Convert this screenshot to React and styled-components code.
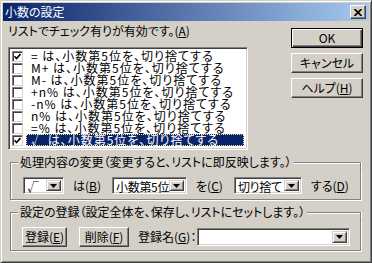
import React from "react";
import styled, { createGlobalStyle } from "styled-components";

const GlobalStyle = createGlobalStyle`
  body {
    margin: 0;
    font-family: "Noto Sans CJK JP", "Noto Sans", sans-serif;
    font-size: 12px;
    font-feature-settings: "palt";
    color: #000;
  }
`;

const items = [
  { op: "=", checked: true },
  { op: "M+" },
  { op: "M-" },
  { op: "+n%" },
  { op: "-n%" },
  { op: "n%" },
  { op: "=%" },
  { op: "√", checked: true, selected: true },
];

const Window = styled.div`
  width: 372px;
  height: 263px;
  box-sizing: border-box;
  background: #d4d0c8;
  border: 1px solid;
  border-color: #d4d0c8 #404040 #404040 #d4d0c8;
  box-shadow: inset 1px 1px #fff, inset -1px -1px #808080;
  padding: 2px;
  display: flex;
  flex-direction: column;
  overflow: hidden;
`;

const TitleBar = styled.div`
  flex: none;
  height: 18px;
  display: flex;
  align-items: center;
  justify-content: space-between;
  padding: 0 3px 0 2px;
  background: linear-gradient(to right, #0a246a, #a6caf0);
`;

const Title = styled.span`
  color: #fff;
  font-size: 12px;
  line-height: 18px;
`;

const CloseButton = styled.div`
  width: 16px;
  height: 14px;
  box-sizing: border-box;
  background: #d4d0c8;
  border: 1px solid;
  border-color: #fff #404040 #404040 #fff;
  box-shadow: inset -1px -1px #808080;
  display: flex;
  align-items: center;
  justify-content: center;
`;

const Body = styled.div`
  display: flex;
  flex-direction: column;
  padding: 0 6px 0 5px;
`;

const TopSection = styled.div`
  display: flex;
  justify-content: space-between;
`;

const LeftCol = styled.div`
  display: flex;
  flex-direction: column;
  padding-top: 3px;
`;

const Caption = styled.div`
  height: 14px;
  line-height: 14px;
  white-space: nowrap;
`;

const ListBox = styled.div`
  margin-top: 9px;
  width: 240px;
  height: 103px;
  box-sizing: border-box;
  background: #fff;
  border: 1px solid;
  border-color: #808080 #fff #fff #808080;
  box-shadow: inset 1px 1px #404040, inset -1px -1px #d4d0c8;
  padding: 2px 3px 0 3px;
  overflow: hidden;
`;

const Row = styled.div`
  display: flex;
  align-items: center;
  height: 12px;
`;

const CheckBox = styled.div`
  flex: none;
  width: 11px;
  height: 11px;
  box-sizing: border-box;
  background: #fff;
  border: 1px solid;
  border-color: #808080 #d4d0c8 #d4d0c8 #808080;
  box-shadow: inset 1px 1px #404040;
  display: flex;
  align-items: center;
  justify-content: center;
`;

const ItemText = styled.div`
  flex: 1;
  margin-left: 3px;
  height: 12px;
  line-height: 12px;
  padding-left: 5px;
  letter-spacing: 1px;
  white-space: nowrap;
  box-sizing: border-box;
  background: ${(p) => (p.$selected ? "#0a246a" : "transparent")};
  color: ${(p) => (p.$selected ? "#fff" : "#000")};
  outline: ${(p) => (p.$selected ? "1px dotted #f4eeb0" : "none")};
  outline-offset: -1px;
`;

const RightCol = styled.div`
  display: flex;
  flex-direction: column;
  gap: 5px;
  padding-top: 7px;
`;

const Button = styled.div`
  width: ${(p) => p.$w}px;
  height: 20px;
  box-sizing: border-box;
  background: #d4d0c8;
  border: 1px solid;
  border-color: ${(p) => (p.$default ? "#000" : "#fff #404040 #404040 #fff")};
  box-shadow: ${(p) =>
    p.$default
      ? "inset 1px 1px #fff, inset -1px -1px #404040, inset -2px -2px #808080"
      : "inset -1px -1px #808080"};
  display: flex;
  align-items: center;
  justify-content: center;
  line-height: 14px;
  white-space: nowrap;
  flex: none;
`;

const Group = styled.div`
  margin: 5px 0 0 2px;
  width: 351px;
  display: flex;
  flex-direction: column;
`;

const GroupHead = styled.div`
  display: flex;
  height: 14px;
  line-height: 14px;
  white-space: nowrap;

  &::before,
  &::after {
    content: "";
    margin-top: 7px;
    box-sizing: border-box;
    border-top: 1px solid #808080;
  }
  &::before {
    width: 8px;
    border-left: 1px solid #808080;
    box-shadow: inset 1px 1px #fff;
  }
  &::after {
    flex: 1;
    border-right: 1px solid #808080;
    box-shadow: inset 0 1px #fff, 1px 0 #fff;
  }
`;

const GroupTitle = styled.span`
  padding: 0 2px;
`;

const GroupBody = styled.div`
  border: 1px solid #808080;
  border-top: none;
  box-shadow: inset 1px 0 #fff, 1px 1px #fff;
  padding: ${(p) => p.$pad};
  display: flex;
  align-items: center;
  gap: ${(p) => p.$gap}px;
`;

const Pair = styled.div`
  display: flex;
  align-items: center;
  gap: ${(p) => p.$gap}px;
`;

const Label = styled.span`
  white-space: nowrap;
  line-height: 14px;
  padding-right: ${(p) => p.$pr || 0}px;
`;

const Combo = styled.div`
  flex: none;
  width: ${(p) => p.$w}px;
  height: ${(p) => p.$h || 17}px;
  box-sizing: border-box;
  background: #fff;
  border: 1px solid;
  border-color: #808080 #fff #fff #808080;
  box-shadow: inset 1px 1px #404040, inset -1px -1px #d4d0c8;
  padding: 2px 2px 2px 3px;
  display: flex;
`;

const ComboText = styled.div`
  flex: 1;
  min-width: 0;
  line-height: 13px;
  letter-spacing: -0.3px;
  white-space: nowrap;
`;

const DropButton = styled.div`
  flex: none;
  width: 15px;
  box-sizing: border-box;
  background: #d4d0c8;
  border: 1px solid;
  border-color: #d4d0c8 #404040 #404040 #d4d0c8;
  box-shadow: inset 1px 1px #fff, inset -1px -1px #808080;
  display: flex;
  align-items: center;
  justify-content: center;
`;

const Check = () => (
  <svg width="7" height="7" viewBox="0 0 7 7">
    <polyline points="0.5,3.2 2.5,5.5 6.5,1" fill="none" stroke="#000" strokeWidth="1.6" />
  </svg>
);

const Arrow = () => (
  <svg width="7" height="4" viewBox="0 0 7 4">
    <polygon points="0,0 7,0 3.5,4" fill="#000" />
  </svg>
);

const CloseIcon = () => (
  <svg width="8" height="7" viewBox="0 0 8 7">
    <path d="M0.5 0 L7.5 7 M7.5 0 L0.5 7" stroke="#000" strokeWidth="1.7" />
  </svg>
);

const Select = ({ w, h, children }) => (
  <Combo $w={w} $h={h}>
    <ComboText>{children}</ComboText>
    <DropButton>
      <Arrow />
    </DropButton>
  </Combo>
);

export default function App() {
  return (
    <>
      <GlobalStyle />
      <Window>
        <TitleBar>
          <Title>小数の設定</Title>
          <CloseButton>
            <CloseIcon />
          </CloseButton>
        </TitleBar>
        <Body>
          <TopSection>
            <LeftCol>
              <Caption>
                リストでチェック有りが有効です。(<u>A</u>)
              </Caption>
              <ListBox>
                {items.map((it) => (
                  <Row key={it.op}>
                    <CheckBox>{it.checked && <Check />}</CheckBox>
                    <ItemText $selected={it.selected}>
                      {it.op} は、小数第5位を、切り捨てする
                    </ItemText>
                  </Row>
                ))}
              </ListBox>
            </LeftCol>
            <RightCol>
              <Button $w={72} $default>OK</Button>
              <Button $w={72}>キャンセル</Button>
              <Button $w={72}>
                ヘルプ(<u>H</u>)
              </Button>
            </RightCol>
          </TopSection>

          <Group>
            <GroupHead>
              <GroupTitle>処理内容の変更（変更すると、リストに即反映します。）</GroupTitle>
            </GroupHead>
            <GroupBody $pad="8px 0 5px 12px" $gap={9}>
              <Select w={41}>√</Select>
              <Label $pr={2}>
                は(<u>B</u>)
              </Label>
              <Select w={75}>小数第5位</Select>
              <Label $pr={2}>
                を(<u>C</u>)
              </Label>
              <Select w={68}>切り捨て</Select>
              <Label $pr={2}>
                する(<u>D</u>)
              </Label>
            </GroupBody>
          </Group>

          <Group>
            <GroupHead>
              <GroupTitle>設定の登録（設定全体を、保存し、リストにセットします。）</GroupTitle>
            </GroupHead>
            <GroupBody $pad="8px 0 3px 11px" $gap={9}>
              <Pair $gap={12}>
                <Button $w={45}>
                  登録(<u>E</u>)
                </Button>
                <Button $w={50}>
                  削除(<u>F</u>)
                </Button>
              </Pair>
              <Pair $gap={1}>
                <Label>
                  登録名(<u>G</u>)：
                </Label>
                <Select w={153} h={18} />
              </Pair>
            </GroupBody>
          </Group>
        </Body>
      </Window>
    </>
  );
}
